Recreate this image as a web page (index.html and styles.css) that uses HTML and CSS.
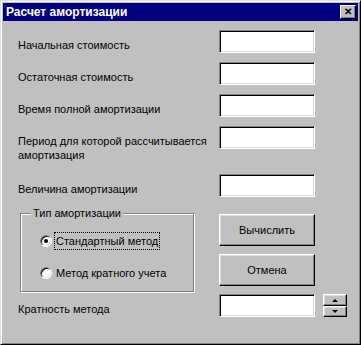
FILE: index.html
```html
<!DOCTYPE html>
<html>
<head>
<title>Расчет амортизации</title>
<meta charset="utf-8">
<link rel="stylesheet" href="styles.css">
</head>
<body>
<div class="window">
  <div class="titlebar">
    <span class="title">Расчет амортизации</span>
    <span class="close">&#x2715;</span>
  </div>
  <div class="content">
    <div class="row">
      <label class="lbl">Начальная стоимость</label>
      <div class="field"></div>
    </div>
    <div class="row">
      <label class="lbl">Остаточная стоимость</label>
      <div class="field"></div>
    </div>
    <div class="row">
      <label class="lbl">Время полной амортизации</label>
      <div class="field"></div>
    </div>
    <div class="row row-tall">
      <label class="lbl">Период для которой рассчитывается амортизация</label>
      <div class="field"></div>
    </div>
    <div class="row">
      <label class="lbl">Величина амортизации</label>
      <div class="field"></div>
    </div>

    <div class="middle">
      <fieldset class="group">
        <legend>Тип амортизации</legend>
        <div class="option first">
          <span class="radio checked"></span>
          <span class="opt-text focused">Стандартный метод</span>
        </div>
        <div class="option">
          <span class="radio"></span>
          <span class="opt-text">Метод кратного учета</span>
        </div>
      </fieldset>
      <div class="buttons">
        <div class="btn">Вычислить</div>
        <div class="btn">Отмена</div>
      </div>
    </div>

    <div class="row row-last">
      <label class="lbl">Кратность метода</label>
      <div class="field"></div>
      <div class="spin">
        <div class="spin-btn up"><span class="arrow-up"></span></div>
        <div class="spin-btn down"><span class="arrow-down"></span></div>
      </div>
    </div>
  </div>
</div>
</body>
</html>
```

FILE: styles.css
```css
body {
  margin: 0;
  background: #c0c0c0;
  font-family: "Liberation Sans", Arial, sans-serif;
  font-size: 11px;
  color: #000;
}

.window {
  width: 361px;
  height: 345px;
  box-sizing: border-box;
  background: #c0c0c0;
  border: 1px solid;
  border-color: #dfdfdf #000 #000 #dfdfdf;
  box-shadow: inset 1px 1px 0 #fff, inset -1px -1px 0 #808080;
  padding: 2px;
}

.titlebar {
  height: 18px;
  background: #000080;
  display: flex;
  align-items: center;
  justify-content: space-between;
  padding-left: 3px;
}

.title {
  color: #fff;
  font-weight: bold;
  font-size: 12px;
}

.close {
  width: 16px;
  height: 14px;
  box-sizing: border-box;
  margin-right: 2px;
  background: #c0c0c0;
  border: 1px solid;
  border-color: #fff #000 #000 #fff;
  box-shadow: inset -1px -1px 0 #808080;
  font-size: 10px;
  font-weight: bold;
  line-height: 12px;
  text-align: center;
}

.content {
  padding: 9px 0 0 15px;
}

.row {
  display: grid;
  grid-template-columns: 201px 96px auto;
  height: 23px;
  margin-bottom: 9px;
}

.row-tall {
  margin-bottom: 25px;
}

.lbl {
  padding-top: 8px;
  line-height: 14px;
  white-space: normal;
}

.field {
  height: 23px;
  box-sizing: border-box;
  background: #fff;
  border: 1px solid;
  border-color: #808080 #fff #fff #808080;
  box-shadow: inset 1px 1px 0 #000, inset -1px -1px 0 #dfdfdf;
}

.middle {
  display: grid;
  grid-template-columns: 201px 96px;
}

.group {
  margin: 0 0 0 2px;
  padding: 0;
  width: 174px;
  height: 86px;
  box-sizing: border-box;
  border: 1px solid #808080;
  box-shadow: inset 1px 1px 0 #fff, 1px 1px 0 #fff;
}

.group legend {
  margin-left: 10px;
  padding: 0 2px;
  line-height: 14px;
  background: #c0c0c0;
}

.option {
  display: flex;
  align-items: center;
  height: 17px;
  margin: 15px 0 0 19px;
}

.option.first {
  margin-top: 12px;
}

.radio {
  width: 12px;
  height: 12px;
  box-sizing: border-box;
  border-radius: 50%;
  background: #fff;
  border: 1px solid;
  border-color: #808080 #fff #fff #808080;
  box-shadow: inset 1px 1px 0 #000, inset -1px -1px 0 #dfdfdf;
  display: flex;
  align-items: center;
  justify-content: center;
  margin-right: 2px;
}

.radio.checked::after {
  content: "";
  width: 4px;
  height: 4px;
  border-radius: 50%;
  background: #000;
}

.opt-text {
  padding: 1px 1px;
  line-height: 14px;
  border: 1px dotted transparent;
}

.opt-text.focused {
  border-color: #000;
}

.buttons {
  display: flex;
  flex-direction: column;
  gap: 8px;
  margin-top: 8px;
}

.btn {
  height: 32px;
  box-sizing: border-box;
  border: 1px solid;
  border-color: #fff #000 #000 #fff;
  box-shadow: inset -1px -1px 0 #808080, inset 1px 1px 0 #dfdfdf;
  display: flex;
  align-items: center;
  justify-content: center;
}

.row-last {
  margin-top: 2px;
}

.spin {
  display: flex;
  flex-direction: column;
  width: 24px;
  margin-left: 8px;
}

.spin-btn {
  box-sizing: border-box;
  border: 1px solid;
  border-color: #fff #000 #000 #fff;
  box-shadow: inset -1px -1px 0 #808080, inset 1px 1px 0 #dfdfdf;
  display: flex;
  align-items: center;
  justify-content: center;
}

.spin-btn.up {
  height: 12px;
}

.spin-btn.down {
  height: 11px;
}

.arrow-up {
  border-left: 3px solid transparent;
  border-right: 3px solid transparent;
  border-bottom: 3px solid #000;
}

.arrow-down {
  border-left: 3px solid transparent;
  border-right: 3px solid transparent;
  border-top: 3px solid #000;
}
```
